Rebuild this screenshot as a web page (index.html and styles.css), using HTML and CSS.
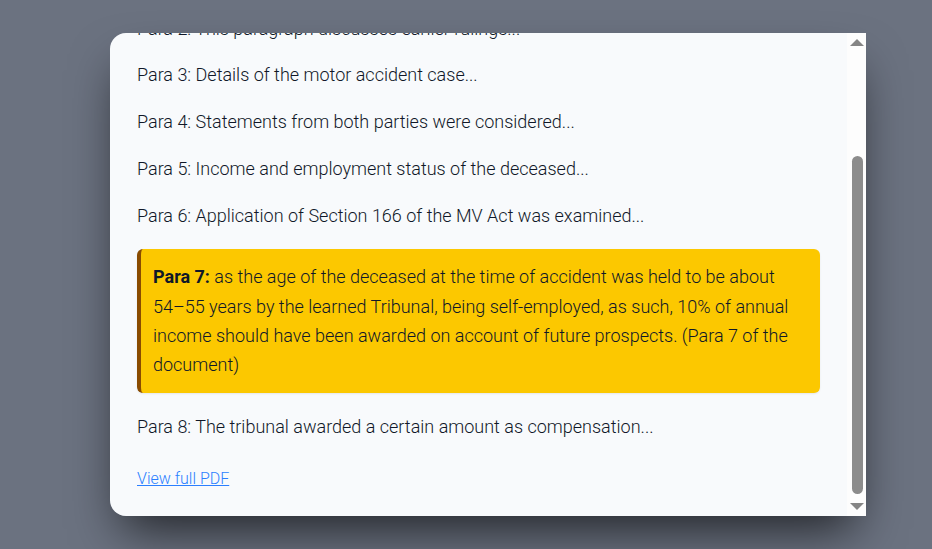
FILE: index.html
```html
<!DOCTYPE html>
<html lang="en">
<head>
<meta charset="utf-8">
<title>Source paragraph</title>
<link rel="stylesheet" href="styles.css">
</head>
<body>
  <div class="overlay">
    <div class="modal-frame">
      <div class="modal">
        <div class="modal-content">
          <h2 class="modal-title">Source Document</h2>
          <p class="para">Para 1: Introduction of the appeal and parties...</p>
          <p class="para">Para 2: This paragraph discusses earlier rulings...</p>
          <p class="para">Para 3: Details of the motor accident case...</p>
          <p class="para">Para 4: Statements from both parties were considered...</p>
          <p class="para">Para 5: Income and employment status of the deceased...</p>
          <p class="para">Para 6: Application of Section 166 of the MV Act was examined...</p>
          <div class="highlight">
            <strong>Para 7:</strong> as the age of the deceased at the time of accident was held to be about <span class="nowrap">54–55</span> years by the learned Tribunal, being self-employed, as such, 10% of annual income should have been awarded on account of future prospects. (Para 7 of the document)
          </div>
          <p class="para">Para 8: The tribunal awarded a certain amount as compensation...</p>
          <div class="link-row"><a class="pdf-link" href="#">View full PDF</a></div>
        </div>
      </div>
      <div class="scrollbar" aria-hidden="true">
        <svg class="sb-arrow" width="14" height="7" viewBox="0 0 14 7"><polygon points="7,0 14,7 0,7" fill="#858585"/></svg>
        <div class="sb-track">
          <div class="sb-thumb"></div>
        </div>
        <svg class="sb-arrow" width="14" height="7" viewBox="0 0 14 7"><polygon points="0,0 14,0 7,7" fill="#858585"/></svg>
      </div>
    </div>
  </div>
</body>
</html>
```
FILE: styles.css
```css
* { box-sizing: border-box; }

html, body {
  margin: 0;
  height: 100%;
}

body {
  background: #6b7280;
  font-family: Roboto, "Liberation Sans", sans-serif;
  color: #101828;
}

.overlay {
  height: 100%;
  display: flex;
  align-items: center;
  padding-left: 110px;
}

.modal-frame {
  position: relative;
  width: 756px;
  height: 483px;
  border-radius: 16px;
  box-shadow: 0 25px 50px -12px rgba(0, 0, 0, 0.7);
}

.modal {
  height: 100%;
  background: #f8fafc;
  border-radius: 16px;
  overflow-y: auto;
  scrollbar-width: none;
  display: flex;
  flex-direction: column-reverse;
}

.modal::-webkit-scrollbar {
  display: none;
}

.modal-content {
  padding: 28px 46px 24px 27px;
  font-weight: 300;
}

.modal-title {
  margin: 0 0 30px;
  font-size: 20px;
  line-height: 28px;
  font-weight: 600;
}

.para {
  margin: 0 0 17.5px;
  font-size: 18px;
  line-height: 29.25px;
}

.highlight {
  margin: 19px 0 19px;
  padding: 13.5px 12px;
  background: #fcc800;
  border-left: 4px solid #894b00;
  border-radius: 6px;
  box-shadow: 0 1px 2px rgba(0, 0, 0, 0.08);
  font-size: 18px;
  line-height: 29.25px;
}

.highlight strong {
  font-weight: 700;
}

.nowrap {
  white-space: nowrap;
}

.highlight + .para {
  margin-bottom: 0;
}

.link-row {
  margin-top: 25px;
  font-size: 16px;
  line-height: 26px;
}

.pdf-link {
  color: #2b7fff;
  text-decoration: underline;
}

/* drawn scrollbar overlaying the right edge of the panel */
.scrollbar {
  position: absolute;
  top: 0;
  right: 0;
  bottom: 0;
  width: 19px;
  background: #fdfdfd;
  display: flex;
  flex-direction: column;
  align-items: center;
  padding: 6px 0 6px 1px;
}

.sb-arrow {
  display: block;
  flex: none;
}

.sb-track {
  flex: 1;
  width: 100%;
  display: flex;
  flex-direction: column;
  justify-content: flex-end;
  align-items: center;
  padding: 0 0 9px;
}

.sb-thumb {
  width: 11px;
  height: 338px;
  border-radius: 6px;
  background: #8c8c8c;
}
```
